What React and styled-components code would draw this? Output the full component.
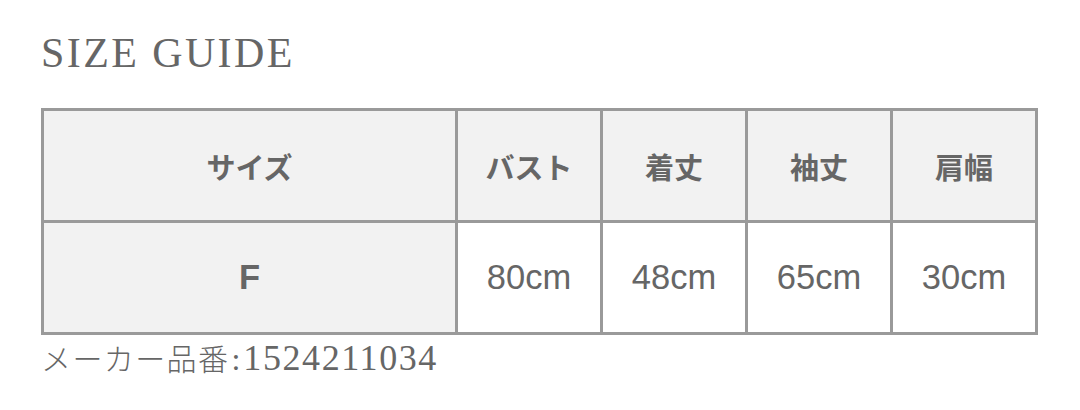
import React from 'react';
import styled, { createGlobalStyle } from 'styled-components';

const Global = createGlobalStyle`
  html, body {
    margin: 0;
    padding: 0;
    background: #ffffff;
  }
`;

const Page = styled.div`
  padding: 28px 0 0 41px;
  color: #666666;
`;

const Title = styled.h2`
  margin: 0 0 29px 0;
  font-family: "Liberation Serif", "Times New Roman", serif;
  font-weight: 400;
  font-size: 42px;
  line-height: 51px;
  letter-spacing: 2.4px;
  color: #666666;
`;

const Table = styled.div`
  width: 997px;
  box-sizing: border-box;
  display: grid;
  grid-template-columns: 411px repeat(4, 1fr);
  grid-auto-rows: 109px;
  gap: 3px;
  padding: 3px;
  background: #9a9a9a;
`;

const Cell = styled.div`
  display: flex;
  align-items: center;
  justify-content: center;
  background: ${p => (p.$shaded ? '#f2f2f2' : '#ffffff')};
  color: #666666;
  font-family: ${p => (p.$head ? '"Noto Sans CJK JP", "Liberation Sans", sans-serif' : '"Liberation Sans", Arial, sans-serif')};
  font-weight: ${p => (p.$bold ? 700 : 400)};
  font-size: ${p => (p.$head ? '29px' : '34.5px')};
`;

const Note = styled.p`
  margin: 2px 0 0 0;
  font-family: "Liberation Serif", "Noto Sans CJK JP", serif;
  font-size: 32px;
  line-height: 40px;
  color: #666666;
`;

const Kana = styled.span`
  font-family: "Noto Sans CJK JP", sans-serif;
  font-weight: 300;
  font-size: 30px;
  letter-spacing: 1.4px;
`;

const Sep = styled.span`
  margin: 0 3px 0 2px;
`;

const Code = styled.span`
  font-size: 36px;
  letter-spacing: 1.6px;
`;

const heads = ['サイズ', 'バスト', '着丈', '袖丈', '肩幅'];
const values = ['80cm', '48cm', '65cm', '30cm'];

export default function App() {
  return (
    <>
      <Global />
      <Page>
        <Title>SIZE GUIDE</Title>
        <Table>
          {heads.map(h => (
            <Cell key={h} $head $bold $shaded>{h}</Cell>
          ))}
          <Cell $bold $shaded>F</Cell>
          {values.map(v => (
            <Cell key={v}>{v}</Cell>
          ))}
        </Table>
        <Note>
          <Kana>メーカー品番</Kana><Sep>:</Sep><Code>1524211034</Code>
        </Note>
      </Page>
    </>
  );
}
